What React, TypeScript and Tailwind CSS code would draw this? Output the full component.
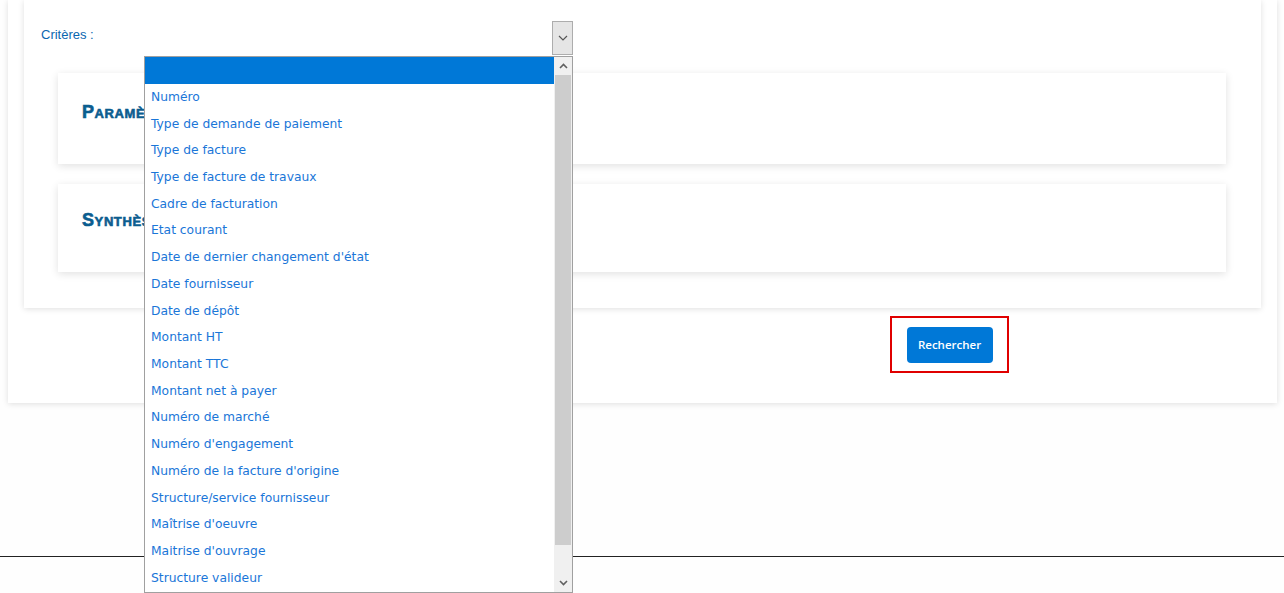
import React from "react";

const options = [
  "",
  "Numéro",
  "Type de demande de paiement",
  "Type de facture",
  "Type de facture de travaux",
  "Cadre de facturation",
  "Etat courant",
  "Date de dernier changement d'état",
  "Date fournisseur",
  "Date de dépôt",
  "Montant HT",
  "Montant TTC",
  "Montant net à payer",
  "Numéro de marché",
  "Numéro d'engagement",
  "Numéro de la facture d'origine",
  "Structure/service fournisseur",
  "Maîtrise d'oeuvre",
  "Maitrise d'ouvrage",
  "Structure valideur",
];

function Section({ title, tall }: { title: string; tall?: boolean }) {
  return (
    <div
      className={
        "flex items-center bg-white px-6 shadow-[0_2px_8px_rgba(0,0,0,0.12)] " +
        (tall ? "h-[91px] pb-[13px]" : "h-[88px] pb-[15px]")
      }
    >
      <h2 className="text-[18px] font-black tracking-[0.6px] text-[#0b5d8f] [-webkit-text-stroke:0.6px_#0b5d8f] [font-variant:small-caps] [font-family:'Liberation_Sans',Arial,sans-serif]">
        {title}
      </h2>
    </div>
  );
}

function Listbox() {
  return (
    <div className="absolute left-[144px] top-[56px] flex h-[537px] w-[429px] border border-[#a0a0a0] bg-white [font-family:'DejaVu_Sans',Tahoma,sans-serif]">
      <ul className="flex-1 overflow-hidden">
        {options.map((o, i) => (
          <li
            key={i}
            className={
              "flex h-[26.72px] items-center whitespace-nowrap pl-[6px] text-[12.3px] " +
              (i === 0 ? "bg-[#0078d7] text-white" : "text-[#1a76d8]")
            }
          >
            {o}
          </li>
        ))}
      </ul>
      <div className="flex w-[18px] flex-col bg-[#f0f0f0]">
        <div className="flex h-[18px] items-center justify-center">
          <svg width="9" height="6" viewBox="0 0 9 6">
            <path d="M1 5 L4.5 1.5 L8 5" fill="none" stroke="#606060" strokeWidth="1.6" />
          </svg>
        </div>
        <div className="mx-[1px] h-[470px] bg-[#cdcdcd]" />
        <div className="flex-1" />
        <div className="flex h-[18px] items-center justify-center">
          <svg width="9" height="6" viewBox="0 0 9 6">
            <path d="M1 1 L4.5 4.5 L8 1" fill="none" stroke="#606060" strokeWidth="1.6" />
          </svg>
        </div>
      </div>
    </div>
  );
}

export default function App() {
  return (
    <div className="relative h-[593px] w-[1284px] overflow-hidden bg-[#fefefe] [font-family:'Liberation_Sans',Arial,sans-serif]">
      <div className="ml-2 w-[1269px] bg-white pb-[30px] shadow-[0_1px_6px_rgba(0,0,0,0.13)]">
        <div className="mx-4 bg-white px-[34px] pb-[36px] shadow-[0_1px_6px_rgba(0,0,0,0.13)]">
          <div className="flex h-[73px] items-start">
            <div className="-ml-[17px] mt-[25px] w-[511px] text-[13px] text-[#0a66b0]">Critères :</div>
            <div className="mt-[21px] flex h-[34px] w-[21px] items-center justify-center border border-[#adadad] bg-[#e5e5e5]">
              <svg width="10" height="6" viewBox="0 0 10 6">
                <path d="M1 1 L5 5 L9 1" fill="none" stroke="#555" strokeWidth="1.2" />
              </svg>
            </div>
          </div>
          <div className="flex flex-col gap-[20px] pr-px">
            <Section title="Paramètres" tall />
            <Section title="Synthèse" />
          </div>
        </div>
        <div className="ml-[882px] mt-[8px] flex h-[57px] w-[119px] items-center justify-center border-2 border-[#e00000]">
          <button className="h-[36px] w-[86px] rounded-[4px] bg-[#0078d7] text-[11.5px] font-semibold text-white [font-family:'Open_Sans',sans-serif]">
            Rechercher
          </button>
        </div>
      </div>
      <div className="mt-[153px] h-px w-full bg-[#222]" />
      <Listbox />
    </div>
  );
}
